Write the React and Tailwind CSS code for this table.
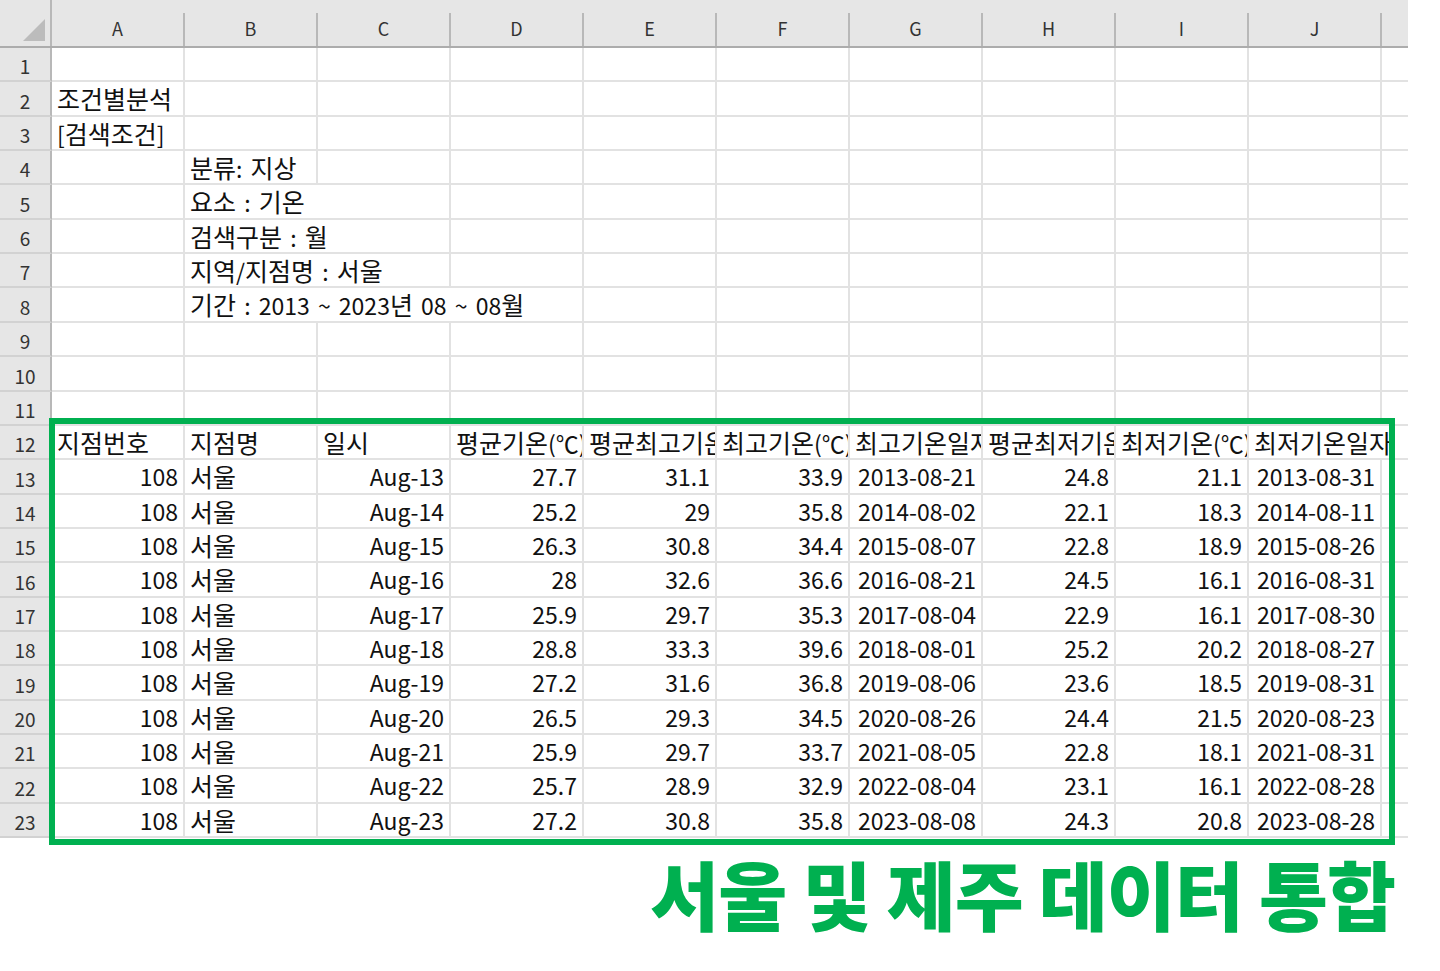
import React from "react";

const COLS = ["A", "B", "C", "D", "E", "F", "G", "H", "I", "J"];

const DATA = [
  ["Aug-13", "27.7", "31.1", "33.9", "2013-08-21", "24.8", "21.1", "2013-08-31"],
  ["Aug-14", "25.2", "29", "35.8", "2014-08-02", "22.1", "18.3", "2014-08-11"],
  ["Aug-15", "26.3", "30.8", "34.4", "2015-08-07", "22.8", "18.9", "2015-08-26"],
  ["Aug-16", "28", "32.6", "36.6", "2016-08-21", "24.5", "16.1", "2016-08-31"],
  ["Aug-17", "25.9", "29.7", "35.3", "2017-08-04", "22.9", "16.1", "2017-08-30"],
  ["Aug-18", "28.8", "33.3", "39.6", "2018-08-01", "25.2", "20.2", "2018-08-27"],
  ["Aug-19", "27.2", "31.6", "36.8", "2019-08-06", "23.6", "18.5", "2019-08-31"],
  ["Aug-20", "26.5", "29.3", "34.5", "2020-08-26", "24.4", "21.5", "2020-08-23"],
  ["Aug-21", "25.9", "29.7", "33.7", "2021-08-05", "22.8", "18.1", "2021-08-31"],
  ["Aug-22", "25.7", "28.9", "32.9", "2022-08-04", "23.1", "16.1", "2022-08-28"],
  ["Aug-23", "27.2", "30.8", "35.8", "2023-08-08", "24.3", "20.8", "2023-08-28"],
];

function buildRows() {
  const rows = [];
  for (let r = 1; r <= 23; r++) {
    rows.push(Array(11).fill(null).map(() => ({ t: "", a: "l", o: false })));
  }
  const set = (r, c, t, a = "l", o = false) => {
    rows[r - 1][c] = { t, a, o };
  };
  set(2, 0, "조건별분석");
  set(3, 0, "[검색조건]");
  set(4, 1, "분류: 지상");
  set(5, 1, "요소 : 기온", "l", true);
  set(6, 1, "검색구분 : 월", "l", true);
  set(7, 1, "지역/지점명 : 서울", "l", true);
  set(8, 1, "기간 : 2013 ~ 2023년 08 ~ 08월", "l", true);
  rows[7][2] = { t: "", a: "l", o: true };
  const heads = ["지점번호", "지점명", "일시", "평균기온(℃)", "평균최고기온(℃)", "최고기온(℃)", "최고기온일자", "평균최저기온(℃)", "최저기온(℃)", "최저기온일자"];
  heads.forEach((h, i) => set(12, i, h, "l", i === 9));
  DATA.forEach((d, k) => {
    const r = 13 + k;
    set(r, 0, "108", "r");
    set(r, 1, "서울", "l");
    d.forEach((v, j) => set(r, 2 + j, v, "r"));
  });
  return rows;
}

const ROWS = buildRows();

function rowHeightClass(i) {
  const a = Math.round(47 + i * 34.35);
  const b = Math.round(47 + (i + 1) * 34.35);
  return b - a === 35 ? "h-[35px]" : "h-[34px]";
}

// Hangul runs are set a little larger, like Malgun Gothic's wide Hangul
function KText({ text }) {
  const parts = text.split(/([\uAC00-\uD7A3]+)/);
  return (
    <>
      {parts.map((p, i) =>
        /[\uAC00-\uD7A3]/.test(p) ? (
          <span key={i} className="text-[25px]">
            {p}
          </span>
        ) : (
          <span key={i}>{p}</span>
        )
      )}
    </>
  );
}

function Cell({ cell, last }) {
  const base =
    "shrink-0 h-full border-b-2 border-[#e2e2e2] flex items-center whitespace-nowrap px-[5px] text-[23px] leading-none text-[#111] [word-spacing:3px]";
  const w = last ? "w-[26px]" : "w-[133px]";
  const right = cell.o || last ? "" : "border-r-2";
  const ov = cell.o ? "overflow-visible relative z-10" : "overflow-hidden";
  const al = cell.a === "r" ? "justify-end" : "justify-start";
  return (
    <div className={`${base} ${w} ${right} ${ov} ${al}`}>
      {cell.t ? (
        <span className="whitespace-nowrap">
          <KText text={cell.t} />
        </span>
      ) : null}
    </div>
  );
}

export default function App() {
  return (
    <div className="relative w-[1440px] h-[971px] bg-white overflow-hidden font-['Noto_Sans_CJK_KR','Noto_Sans',sans-serif]">
      <div className="w-[1408px] overflow-hidden">
        {/* column header */}
        <div className="flex h-[48px] bg-[#e6e6e6] border-b-2 border-[#acacac] items-end">
          <div className="w-[52px] h-full shrink-0 border-r-2 border-[#b8b8b8] flex items-end justify-end pr-[4px] pb-[4px]">
            <svg width="24" height="24" viewBox="0 0 24 24">
              <polygon points="23,1 23,23 1,23" fill="#bcbcbc" />
            </svg>
          </div>
          {COLS.map((c) => (
            <div
              key={c}
              className="w-[133px] h-[33px] shrink-0 border-r-2 border-[#b8b8b8] flex items-center justify-center text-[18px] leading-none text-[#333] pb-[4px]"
            >
              {c}
            </div>
          ))}
          <div className="w-[26px] h-[33px] shrink-0" />
        </div>
        {/* body rows */}
        {ROWS.map((cells, i) => (
          <div key={i} className={`flex ${rowHeightClass(i)}`}>
            <div className="w-[52px] h-full shrink-0 bg-[#e6e6e6] border-r-2 border-[#b8b8b8] border-b-2 border-b-[#d2d2d2] flex items-center justify-center pt-[3px] text-[19px] leading-none text-[#333]">
              {i + 1}
            </div>
            {cells.map((cell, j) => (
              <Cell key={j} cell={cell} last={j === 10} />
            ))}
          </div>
        ))}
      </div>

      {/* highlight box */}
      <div className="absolute left-[49px] top-[418px] w-[1346px] h-[427px] border-[6px] border-[#00b050] z-20 pointer-events-none" />

      {/* caption */}
      <div className="flex justify-end pr-[45px] mt-[17px]">
        <div className="text-[75px] leading-none font-black text-[#00b050] tracking-[-1px]">
          서울 및 제주 데이터 통합
        </div>
      </div>
    </div>
  );
}
